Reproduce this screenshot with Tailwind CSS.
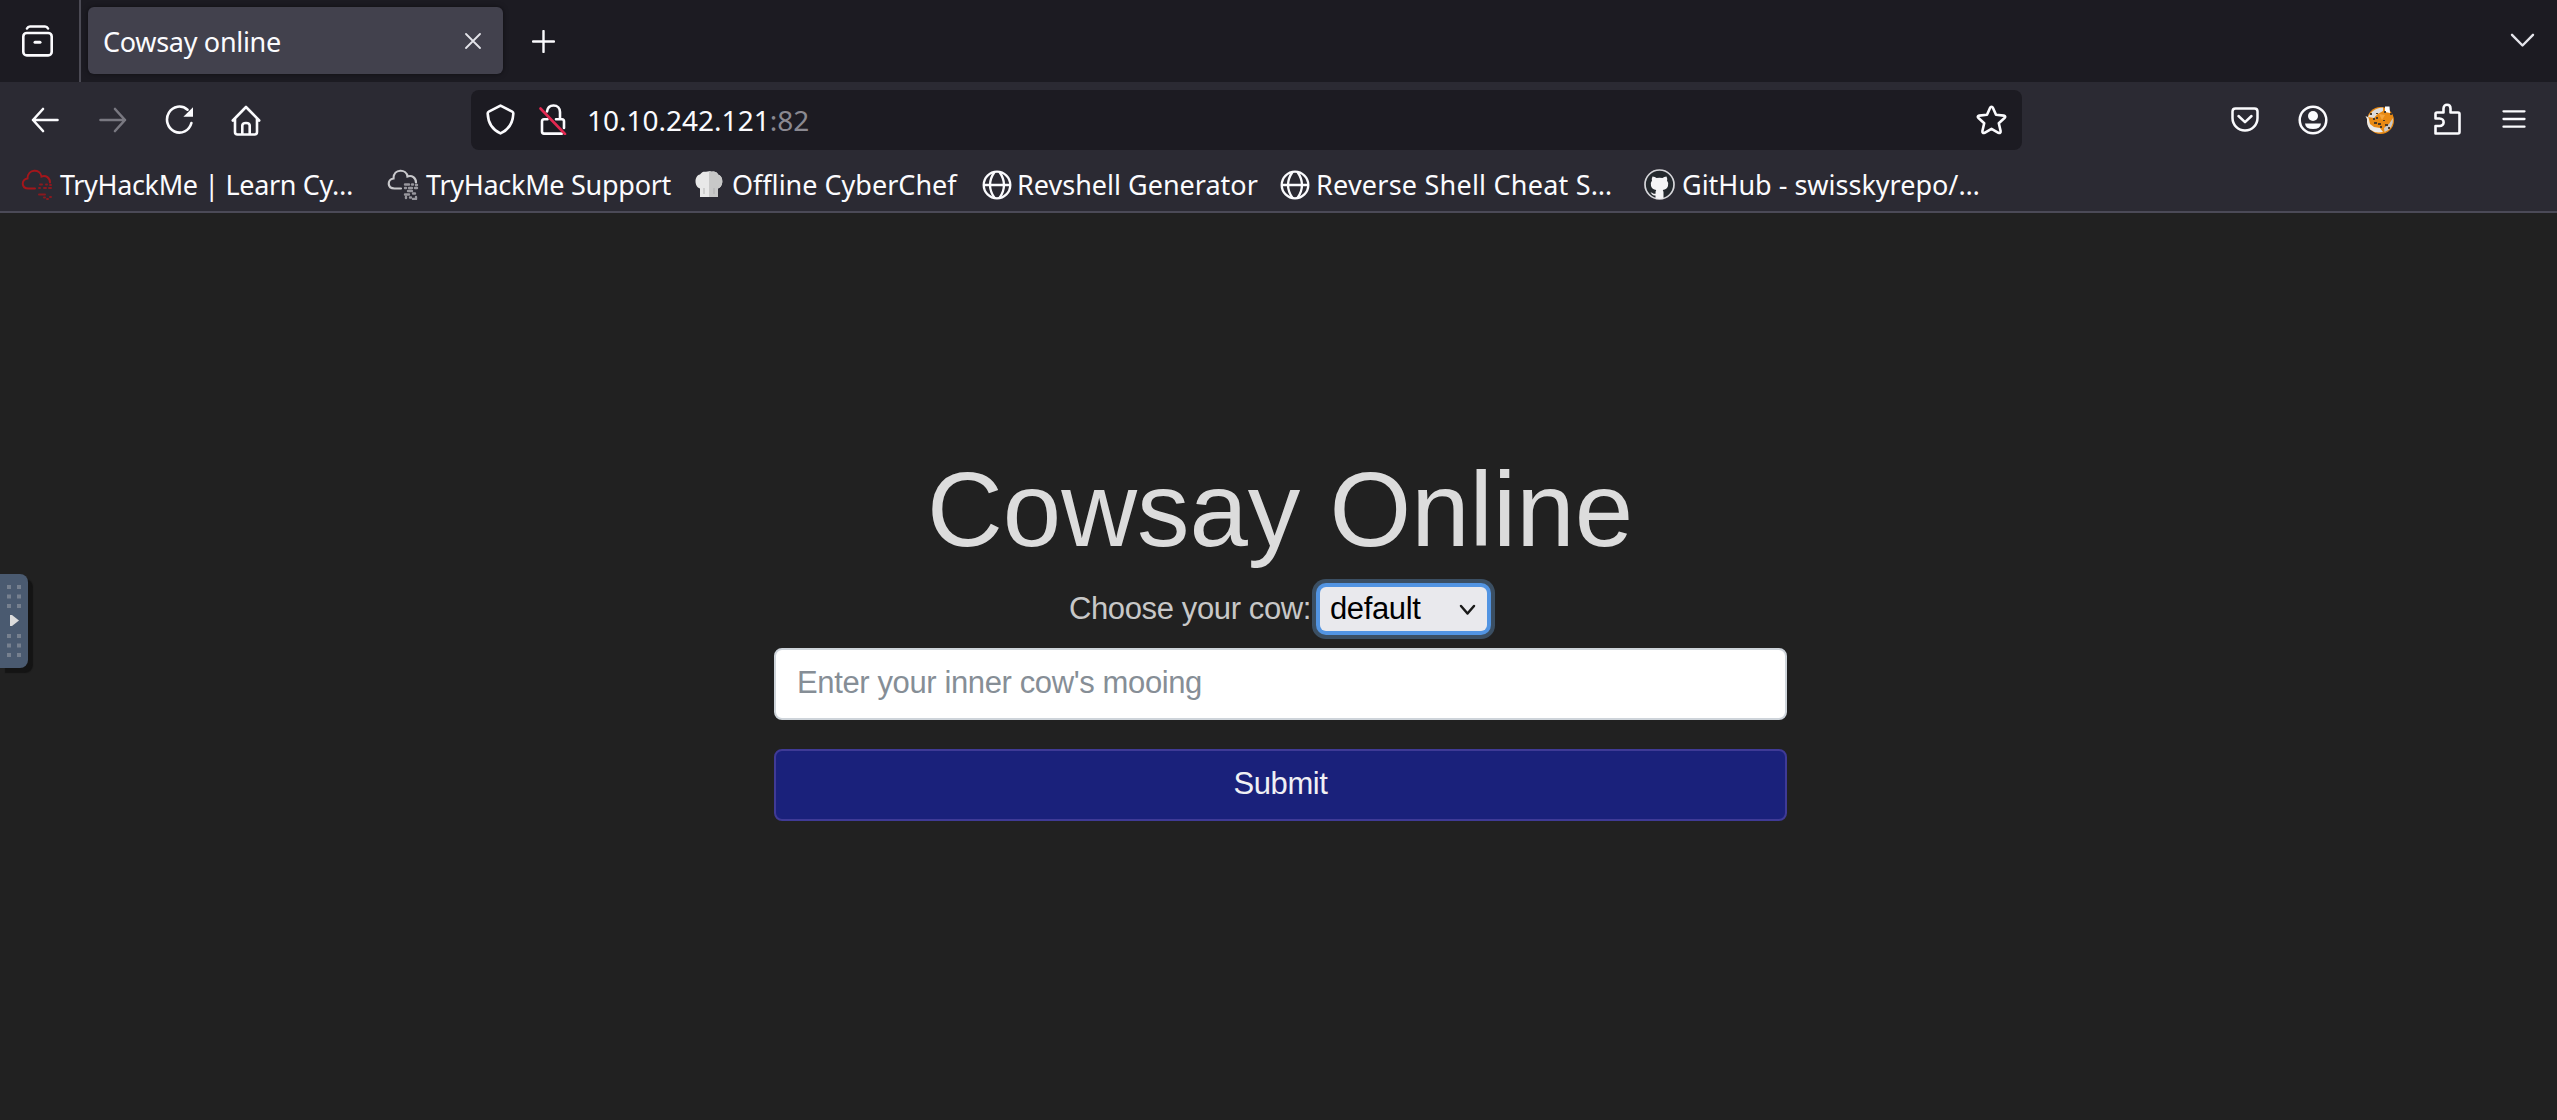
<!DOCTYPE html>
<html lang="en">
<head>
<meta charset="utf-8">
<title>Cowsay online</title>
<script src="https://cdn.jsdelivr.net/npm/@tailwindcss/browser@4"></script>
</head>
<body class="w-[2557px] h-[1120px] overflow-hidden relative bg-[#212121] text-[#fbfbfe] font-['Noto_Sans',sans-serif] text-[27px]">

<!-- Tab strip -->
<header class="h-[82px] bg-[#1c1b22] flex items-center whitespace-nowrap">
  <div class="w-[81px] h-full border-r-2 border-[#4b4a54] flex items-center pl-[21px] shrink-0">
    <svg class="w-[33px] h-[32px]" viewBox="0 0 33 32" fill="none" stroke="#fbfbfe" stroke-width="2.6" stroke-linecap="round"><path d="M6 3.5Q7 1.5 9 1.5H24Q26 1.5 27 3.5"/><rect x="2.3" y="8" width="28.4" height="22.4" rx="3.5"/><path d="M14 17.3H19" stroke-width="3"/></svg>
  </div>
  <div class="ml-[7px] w-[415px] h-[67px] -mt-px rounded-md bg-[#42414d] shadow-[0_0_5px_rgba(0,0,0,0.5)] flex items-center justify-between pl-[15px] pr-[22px]">
    <span class="tracking-[-0.3px] pt-[3px]">Cowsay online</span>
    <svg class="w-[16px] h-[16px]" viewBox="0 0 16 16" fill="none" stroke="#e4e4ea" stroke-width="1.8" stroke-linecap="round"><path d="M1 1L15 15M15 1L1 15"/></svg>
  </div>
  <svg class="ml-[29px] mt-px w-[23px] h-[23px]" viewBox="0 0 23 23" fill="none" stroke="#fbfbfe" stroke-width="2.4" stroke-linecap="round"><path d="M11.5 1V22M1 11.5H22"/></svg>
  <svg class="ml-auto mr-[22px] -mt-0.5 w-[25px] h-[15px]" viewBox="0 0 25 15" fill="none" stroke="#e4e4ea" stroke-width="2.4" stroke-linecap="round" stroke-linejoin="round"><path d="M2 1.8L12.5 12.5L23 1.8"/></svg>
</header>

<!-- Navigation toolbar -->
<nav class="h-[75px] bg-[#2b2a33] flex items-center whitespace-nowrap">
  <svg class="ml-[31px] w-[28px] h-[26px] shrink-0" viewBox="0 0 28 26" fill="none" stroke="#fbfbfe" stroke-width="2.6" stroke-linecap="round" stroke-linejoin="round"><path d="M12 2L2 13L12 24M2 13H26.5"/></svg>
  <svg class="ml-[40px] w-[28px] h-[26px] shrink-0" viewBox="0 0 28 26" fill="none" stroke="#797881" stroke-width="2.6" stroke-linecap="round" stroke-linejoin="round"><path d="M16 2L26 13L16 24M26 13H1.5"/></svg>
  <svg class="ml-[38px] w-[30px] h-[30px] shrink-0" viewBox="0 0 30 30" fill="none" stroke="#fbfbfe" stroke-width="2.6" stroke-linecap="round"><path d="M22.5 4.7A12.4 13 0 1 0 26.4 18"/><path d="M28 2.2V11.8H18.4Z" fill="#fbfbfe" stroke="none"/></svg>
  <svg class="ml-[36px] mt-0.5 w-[30px] h-[31px] shrink-0" viewBox="0 0 30 31" fill="none" stroke="#fbfbfe" stroke-width="2.6" stroke-linecap="round" stroke-linejoin="round"><path d="M1.8 15.5L15 2L28.2 15.5M4 13.5V27Q4 29.5 6.5 29.5H23.5Q26 29.5 26 27V13.5M11.3 29V20.5Q11.3 18 15 18Q18.7 18 18.7 20.5V29"/></svg>

  <div class="ml-[210px] w-[1551px] h-[60px] shrink-0 rounded-lg bg-[#1c1b22] flex items-center pl-[15px] pr-[15px]">
    <svg class="w-[29px] h-[31px]" viewBox="0 0 29 31" fill="none" stroke="#fbfbfe" stroke-width="2.6" stroke-linejoin="round"><path d="M14.5 1.6L26.2 7.6Q27.4 8.2 27.3 9.6C27 17 24 25 14.5 29.4C5 25 2 17 1.7 9.6Q1.6 8.2 2.8 7.6Z"/></svg>
    <svg class="ml-[24px] w-[28px] h-[31px]" viewBox="0 0 28 31" fill="none"><path d="M8 7.5C8.500 3.800 11 1.500 14.500 1.500C18.500 1.500 21 4.500 21 8V14.500M8.500 15.300H5Q3 15.300 3 17.500V27.500Q3 29.600 5 29.600H23M17 15.300H23Q25 15.300 25 17.500V24" stroke="#fbfbfe" stroke-width="2.6" stroke-linecap="round"/><path d="M1.500 4.500L26 30" stroke="#e22850" stroke-width="2.600" stroke-linecap="round"/></svg>
    <span class="ml-[20px] pt-px text-[28px]">10.10.242.121<span class="text-[#8a8991]">:82</span></span>
    <svg class="ml-auto w-[31px] h-[30px]" viewBox="0 0 31 30" fill="none" stroke="#fbfbfe" stroke-width="2.6" stroke-linejoin="round"><path d="M15.500 1.800Q16.500 1.800 17 3L20 9.800L27.800 10.600Q30.300 11.200 28.500 13L22.800 18.200L24.600 26Q24.800 28.700 22.400 27.800L15.500 23.800L8.600 27.800Q6.200 28.700 6.400 26L8.200 18.200L2.500 13Q0.700 11.200 3.200 10.600L11 9.800L14 3Q14.500 1.800 15.500 1.800Z"/></svg>
  </div>

  <div class="ml-auto mr-[31px] flex items-center">
    <svg class="w-[28px] h-[25px]" viewBox="0 0 28 25" fill="none" stroke="#fbfbfe" stroke-width="2.5" stroke-linecap="round" stroke-linejoin="round"><path d="M4.500 1.500H23.500Q26.500 1.500 26.500 4.500V11A12.500 12.500 0 0 1 1.500 11V4.500Q1.500 1.500 4.500 1.500Z"/><path d="M7.500 9L14 15.200L20.500 9"/></svg>
    <svg class="ml-[39px] mt-px w-[30px] h-[30px]" viewBox="0 0 30 30" fill="none"><circle cx="15" cy="15" r="13.300" stroke="#fbfbfe" stroke-width="2.500"/><circle cx="15" cy="11" r="5" fill="#fbfbfe"/><path d="M7 18.500H23Q22.500 24 15 24Q7.500 24 7 18.500Z" fill="#fbfbfe"/></svg>
    <svg class="ml-[37px] mt-px w-[30px] h-[30px]" viewBox="0 0 30 30"><circle cx="15.500" cy="15.500" r="13.500" fill="#e88a14"/><path d="M5 9Q10 2.500 18 2.500L18 6L12 9.500L9 13L3 12Z" fill="#dcdcdc"/><path d="M0.500 11L3.500 12.500L5 19L9 22L15 23L18 27Q10 28.500 5 24.500Q1.500 20 2 14Z" fill="#e9e9e9"/><path d="M20 1.500L24.500 1.500L25 8L20 7Z" fill="#fff"/><path d="M28 13Q28.500 24 19.500 27L19 23L24 19Z" fill="#c9c9c9"/><path d="M19 6H21V8H19ZM11 12H13V14H11ZM9 17H12V19H9ZM13 18H16V20H13ZM25 8H27V10H25ZM20 19H23V21H20ZM15 21H17V23H15ZM8 13H10V15H8ZM23 22H25V24H23ZM5 8H7V10H5ZM11 8H13V9H11ZM18 15H20V16H18Z" fill="#4d3c28"/><path d="M14 9L20 10L17 15Z" fill="#f5a53c"/></svg>
    <svg class="ml-[38px] -mt-px w-[29px] h-[32px]" viewBox="0 0 29 32" fill="none" stroke="#fbfbfe" stroke-width="2.600" stroke-linejoin="round"><path d="M2.500 30.500V23H6.500C12 23 12 15.500 6.500 15.500H2.500V11Q2.500 9.500 4 9.500H10.500V5.500C10.500 0.500 17.500 0.500 17.500 5.500V9.500H25Q26.500 9.500 26.500 11V29Q26.500 30.500 25 30.500Z"/></svg>
    <svg class="ml-[40px] -mt-0.5 w-[24px] h-[18px]" viewBox="0 0 24 18" fill="none" stroke="#fbfbfe" stroke-width="2.300" stroke-linecap="round"><path d="M1.500 1.300H22.500M1.500 9H22.500M1.500 16.700H22.500"/></svg>
  </div>
</nav>

<!-- Bookmarks bar -->
<div class="h-[56px] bg-[#2b2a33] border-b-2 border-[#4b4a57] flex items-center pl-[21px] whitespace-nowrap">
  <div class="w-[366px] flex items-center gap-[7px]">
    <svg class="w-[32px] h-[32px] shrink-0" viewBox="0 0 32 32" fill="none" stroke="#a3161b" stroke-width="2" stroke-linecap="round"><path d="M14 20.500H7.500C0 20.500 0 11.500 6.500 10.500C6.500 0.500 19.500 0.500 20.500 8.500C25 6.800 29 10 29 14.500"/><path d="M19 16.500H21M25 16.500H26M29 17H30M18 20H19M23 20H25M28 20H30M18 26.500H24M23 29.500H24M26 31H27M29 29H30" stroke="#8a191f"/></svg>
    <span class="pt-0.5 tracking-[-0.35px]">TryHackMe | Learn Cy…</span>
  </div>
  <div class="w-[308px] flex items-center gap-[7px]">
    <svg class="w-[32px] h-[32px] shrink-0" viewBox="0 0 32 32" fill="none" stroke="#c9c9cc" stroke-width="2.200" stroke-linecap="round"><path d="M14 20.500H7.500C0 20.500 0 11.500 6.500 10.500C6.500 0.500 19.500 0.500 20.500 8.500C25 6.800 29 10 29 14.500"/><path d="M18 16.500H22M25 16.500H26M29 17H30M18 20H19M22 20H25M28 20H30M21 23H25M18 26.500H22M26 25.500H28M19 30V29M23 29.500H24M26 31H27M29 29V31" stroke="#98979d" stroke-width="2.400"/></svg>
    <span class="pt-0.5 tracking-[-0.28px]">TryHackMe Support</span>
  </div>
  <div class="w-[287px] flex items-center gap-[9px]">
    <svg class="w-[28px] h-[28px] shrink-0" viewBox="0 0 28 28"><path d="M5 27V18.500C-1 17 -1 5.500 5 4.500C7 1.500 9 1.500 11 1.800Q14 0.500 17 1.800C19 1.200 22 2 23 4.500C29 6 28.500 17 23 18.500V27Z" fill="#e8e8e8"/><path d="M14 1V27H23V18.500C28.500 17 29 6 23 4.500C22 2 19 1.200 17 1.800Q15.500 1 14 1Z" fill="#c8c8c8"/><path d="M9 18V24M19 18V24" stroke="#aaa" stroke-width="0.800"/></svg>
    <span class="pt-0.5">Offline CyberChef</span>
  </div>
  <div class="w-[298px] flex items-center gap-[5px]">
    <svg class="w-[30px] h-[30px] shrink-0 mt-0.5" viewBox="0 0 30 30" fill="none" stroke="#fbfbfe" stroke-width="2.300"><circle cx="15" cy="15" r="13.300"/><path d="M1.700 15H28.300M12.500 2Q3.500 15 12.500 28M17.500 2Q26.500 15 17.500 28"/></svg>
    <span class="pt-0.5">Revshell Generator</span>
  </div>
  <div class="w-[364px] flex items-center gap-[6px]">
    <svg class="w-[30px] h-[30px] shrink-0 mt-0.5" viewBox="0 0 30 30" fill="none" stroke="#fbfbfe" stroke-width="2.300"><circle cx="15" cy="15" r="13.300"/><path d="M1.700 15H28.300M12.500 2Q3.500 15 12.500 28M17.500 2Q26.500 15 17.500 28"/></svg>
    <span class="pt-0.5 tracking-[0.22px]">Reverse Shell Cheat S…</span>
  </div>
  <div class="flex items-center gap-[7px]">
    <svg class="w-[31px] h-[31px] shrink-0" viewBox="0 0 31 31"><circle cx="15.500" cy="15.500" r="14.500" fill="#24292e" stroke="#d6d6da" stroke-width="1.700"/><path d="M8.500 7.500Q11 7.500 12.500 9Q15.500 8.300 18.500 9Q20 7.500 22.500 7.500Q23.500 9.500 23 11.500Q25 14 24 17Q23 20.500 18.800 21Q19.500 22 19.500 23.500V29.300Q15.500 30.500 11.500 29.300V26.500C8.500 27 8 25 6.500 23.500C8.500 23 9 25.200 11.500 24.700Q11.400 22 12.200 21Q8 20.500 7 17Q6 14 8 11.500Q7.500 9.500 8.500 7.500Z" fill="#f4f4f6"/></svg>
    <span class="pt-0.5">GitHub - swisskyrepo/…</span>
  </div>
</div>

<!-- Page content -->
<main class="w-[1013px] ml-[774px] pt-[237px] font-['Liberation_Sans',Arial,sans-serif] text-[31px] tracking-[-0.38px] text-[#dcdcdc]">
  <h1 class="h-[120px] leading-[120px] text-[105px] tracking-normal text-center pr-px whitespace-nowrap">Cowsay Online</h1>
  <div class="mt-[13px] h-[52px] flex items-center whitespace-nowrap pl-[295px] text-[#c8c8c8]">
    <label class="w-[251px] pt-px">Choose your cow:</label>
    <div class="w-[167px] h-[44px] rounded-md bg-[#e9e9ed] shadow-[0_0_0_4px_#5294e2,0_0_0_8px_#3b4f63] text-black flex items-center justify-between pl-[10px] pr-[11px] pt-px">
      <span>default</span>
      <svg class="w-[17px] h-[12px]" viewBox="0 0 17 12" fill="none" stroke="#1a1a1a" stroke-width="2.500" stroke-linecap="round" stroke-linejoin="round"><path d="M2 2L8.500 9.500L15 2"/></svg>
    </div>
  </div>
  <div class="mt-[13px] h-[72px] rounded-lg border-2 border-[#ced4da] bg-white text-[#868e96] flex items-center pl-[21px] pb-0.5 whitespace-nowrap">Enter your inner cow's mooing</div>
  <div class="mt-[29px] h-[72px] rounded-lg border-2 border-[#3f3a96] bg-[#1a217b] text-[#f0f0f4] flex items-center justify-center pb-0.5">Submit</div>
</main>

<!-- Side panel handle -->
<div class="absolute left-0 top-[574px] w-[28px] h-[94px] rounded-r-lg bg-[#4a5a70] shadow-[5px_5px_1px_#141414]">
  <svg class="w-[28px] h-[94px]" viewBox="0 0 28 94"><path d="M7 11h4v4h-4zM17 11h4v4h-4zM7 20.500h4v4h-4zM17 20.500h4v4h-4zM7 30h4v4h-4zM17 30h4v4h-4zM7 60h4v4h-4zM17 60h4v4h-4zM7 69.500h4v4h-4zM17 69.500h4v4h-4zM7 79h4v4h-4zM17 79h4v4h-4z" fill="#76808f"/><path d="M10 41H12L19 46.500L12 52H10Z" fill="#dcdcdc"/></svg>
</div>
</body>
</html>
